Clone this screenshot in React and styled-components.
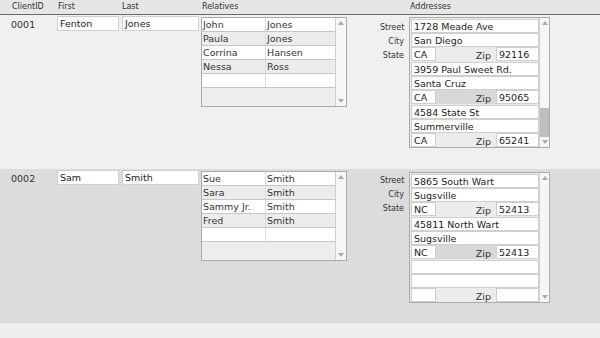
import React from "react";
import styled, { createGlobalStyle } from "styled-components";

const GlobalStyle = createGlobalStyle`
  html, body { margin: 0; padding: 0; background: #efefef; }
  body { font-family: "DejaVu Sans", Verdana, sans-serif; color: #333; }
  * { box-sizing: border-box; }
`;

const COLS = "57px 65px 79px 179px 1fr";

const Header = styled.div`
  display: grid;
  grid-template-columns: ${COLS};
  height: 15px;
  border-bottom: 1px solid #6a6a6a;
  background: #e6e6e6;
  font-size: 8px;
  line-height: 14px;
  color: #333;
`;

const HeaderCell = styled.div`
  padding-left: ${(p) => p.$pad || 0}px;
  white-space: nowrap;
`;

const Record = styled.div`
  display: grid;
  grid-template-columns: ${COLS};
  align-items: start;
  height: 154px;
  padding-top: 1px;
  background: ${(p) => (p.$alt ? "#dcdcdc" : "#f0f0f0")};
`;

const IdCell = styled.div`
  font-size: 9.5px;
  line-height: 15px;
  padding-left: 11px;
  padding-top: 1px;
  color: #333;
`;

const Field = styled.div`
  width: ${(p) => (p.$w ? `${p.$w}px` : "100%")};
  height: ${(p) => p.$h || 14}px;
  flex: none;
  background: #fff;
  border: 1px solid #cfcfcf;
  font-size: 9.5px;
  line-height: ${(p) => (p.$h || 14) - 1}px;
  padding-left: 2px;
  color: #222;
  white-space: nowrap;
  overflow: hidden;
`;

const Grid = styled.div`
  margin-top: 1px;
  width: 146px;
  height: 90px;
  border: 1px solid #ababab;
  display: flex;
  background: #ededed;
`;

const GridBody = styled.div`
  flex: 1;
  display: flex;
  flex-direction: column;
`;

const GridRow = styled.div`
  display: grid;
  grid-template-columns: 64px 1fr;
  height: 14px;
  border-bottom: 1px solid #c6c6c6;
  background: ${(p) => (p.$alt ? "#ececec" : "#ffffff")};
  font-size: 9.5px;
  line-height: 14px;
  color: #333;
`;

const GridCell = styled.div`
  padding-left: 1px;
  border-right: ${(p) => (p.$first ? "1px solid #dcdcdc" : "none")};
  white-space: nowrap;
  overflow: hidden;
`;

const ScrollBar = styled.div`
  width: ${(p) => p.$w || 11}px;
  flex: none;
  display: flex;
  flex-direction: column;
  align-items: stretch;
  border-left: 1px solid #cfcfcf;
  background: #f6f6f6;
`;

const ArrowBox = styled.div`
  height: 10px;
  flex: none;
  display: flex;
  align-items: center;
  justify-content: center;
`;

const Track = styled.div`
  flex: 1;
  display: flex;
  flex-direction: column;
  justify-content: flex-end;
`;

const Thumb = styled.div`
  height: ${(p) => p.$h}px;
  background: #bdbdbd;
`;

const Arrow = ({ down }) => (
  <ArrowBox>
    <svg width="6" height="4" viewBox="0 0 6 4">
      <polygon
        points={down ? "0,0 6,0 3,4" : "0,4 6,4 3,0"}
        fill="#a9a9a9"
      />
    </svg>
  </ArrowBox>
);

const AddrCell = styled.div`
  display: flex;
  align-items: flex-start;
`;

const Labels = styled.div`
  width: 29px;
  padding-right: 5px;
  padding-top: ${(p) => p.$top}px;
  text-align: right;
  font-size: 8px;
  line-height: 14px;
  color: #333;
`;

const AddrBox = styled.div`
  margin-top: ${(p) => p.$top}px;
  width: 141px;
  height: 131px;
  border: 1px solid #ababab;
  display: flex;
  background: #ececec;
`;

const Blocks = styled.div`
  width: 129px;
  padding: 1px 0 0 1px;
  display: flex;
  flex-direction: column;
`;

const Block = styled.div`
  display: flex;
  flex-direction: column;
  padding-bottom: 1px;
`;

const StateRow = styled.div`
  display: flex;
  height: 14px;
  background: ${(p) => (p.$alt ? "#d8d8d8" : "#ececec")};
`;

const ZipLabel = styled.div`
  flex: 1;
  text-align: right;
  padding-right: 5px;
  font-size: 9.5px;
  line-height: 17px;
  color: #333;
`;

const data = [
  {
    id: "0001",
    first: "Fenton",
    last: "Jones",
    relatives: [
      ["John", "Jones"],
      ["Paula", "Jones"],
      ["Corrina", "Hansen"],
      ["Nessa", "Ross"],
      ["", ""],
    ],
    addresses: [
      ["1728 Meade Ave", "San Diego", "CA", "92116"],
      ["3959 Paul Sweet Rd.", "Santa Cruz", "CA", "95065"],
      ["4584 State St", "Summerville", "CA", "65241"],
    ],
    thumb: true,
  },
  {
    id: "0002",
    first: "Sam",
    last: "Smith",
    relatives: [
      ["Sue", "Smith"],
      ["Sara", "Smith"],
      ["Sammy Jr.", "Smith"],
      ["Fred", "Smith"],
      ["", ""],
    ],
    addresses: [
      ["5865 South Wart", "Sugsville", "NC", "52413"],
      ["45811 North Wart", "Sugsville", "NC", "52413"],
      ["", "", "", ""],
    ],
    thumb: false,
  },
];

export default function App() {
  return (
    <>
      <GlobalStyle />
      <Header>
        <HeaderCell $pad={12}>ClientID</HeaderCell>
        <HeaderCell $pad={1}>First</HeaderCell>
        <HeaderCell $pad={0}>Last</HeaderCell>
        <HeaderCell $pad={1}>Relatives</HeaderCell>
        <HeaderCell $pad={30}>Addresses</HeaderCell>
      </Header>
      {data.map((r, i) => (
        <Record key={r.id} $alt={i === 1}>
          <IdCell>{r.id}</IdCell>
          <Field $w={62} $h={15}>{r.first}</Field>
          <Field $w={77} $h={15}>{r.last}</Field>
          <Grid>
            <GridBody>
              {r.relatives.map((rel, j) => (
                <GridRow key={j} $alt={j % 2 === 1}>
                  <GridCell $first>{rel[0]}</GridCell>
                  <GridCell>{rel[1]}</GridCell>
                </GridRow>
              ))}
            </GridBody>
            <ScrollBar>
              <Arrow />
              <Track />
              <Arrow down />
            </ScrollBar>
          </Grid>
          <AddrCell>
            <Labels $top={i === 0 ? 5 : 4}>
              <div>Street</div>
              <div>City</div>
              <div>State</div>
            </Labels>
            <AddrBox $top={i === 0 ? 1 : 2}>
              <Blocks>
                {r.addresses.map((a, k) => (
                  <Block key={k}>
                    <Field>{a[0]}</Field>
                    <Field>{a[1]}</Field>
                    <StateRow $alt={k === 1}>
                      <Field $w={25}>{a[2]}</Field>
                      <ZipLabel>Zip</ZipLabel>
                      <Field $w={43}>{a[3]}</Field>
                    </StateRow>
                  </Block>
                ))}
              </Blocks>
              <ScrollBar $w={10}>
                <Arrow />
                <Track>{r.thumb && <Thumb $h={29} />}</Track>
                <Arrow down />
              </ScrollBar>
            </AddrBox>
          </AddrCell>
        </Record>
      ))}
    </>
  );
}
